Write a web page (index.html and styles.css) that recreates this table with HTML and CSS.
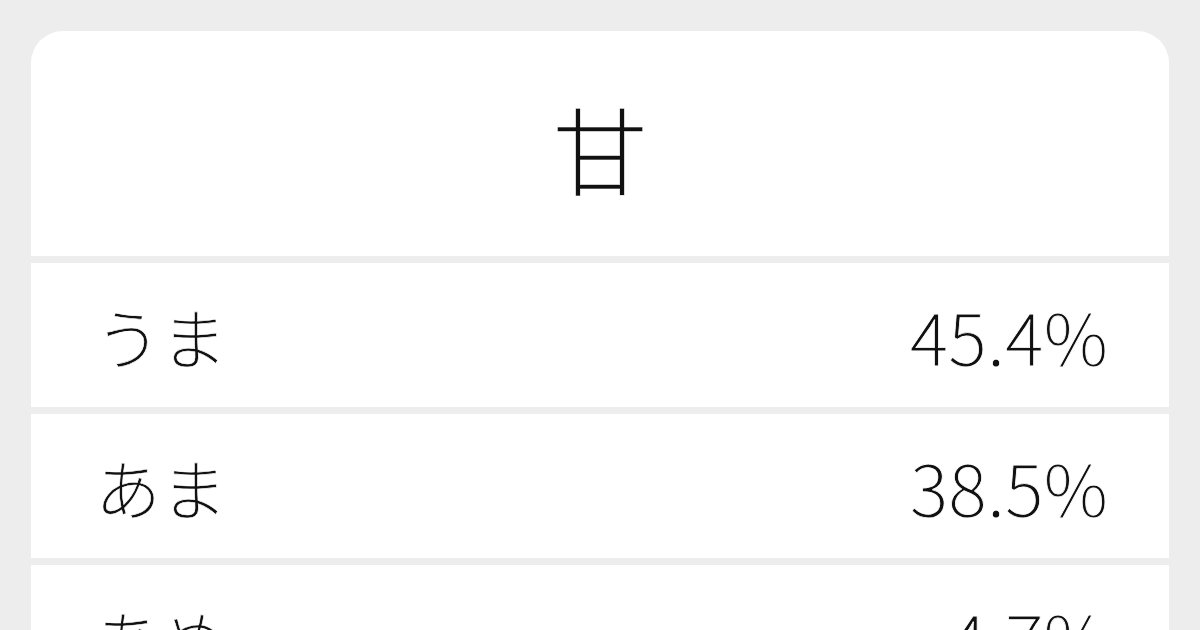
FILE: index.html
```html
<!DOCTYPE html>
<html lang="ja">
<head>
<meta charset="utf-8">
<link rel="stylesheet" href="styles.css">
</head>
<body>
<div class="card">
  <div class="head"><span class="kanji">甘</span></div>
  <div class="row"><span class="yomi">うま</span><span class="pct">45.4%</span></div>
  <div class="row"><span class="yomi">あま</span><span class="pct">38.5%</span></div>
  <div class="row"><span class="yomi">あめ</span><span class="pct">4.7%</span></div>
</div>
</body>
</html>
```
FILE: styles.css
```css
html, body {
  margin: 0;
  height: 100%;
  overflow: hidden;
}
body {
  background: #ededed;
  padding: 31px 31px 0 31px;
  box-sizing: border-box;
  font-family: "Noto Sans CJK JP Light", "Noto Sans CJK JP", "Noto Sans", sans-serif;
  font-weight: 300;
  color: #111;
}
.card {
  display: flex;
  flex-direction: column;
  gap: 7px;
  border-radius: 32px 32px 0 0;
  overflow: hidden;
}
.head {
  height: 225px;
  background: #fff;
  display: flex;
  align-items: center;
  justify-content: center;
}
.kanji {
  font-size: 96px;
  line-height: 1;
  position: relative;
  top: 3px;
  -webkit-text-stroke: 0.6px #fff;
}
.row {
  height: 144px;
  background: #fff;
  display: flex;
  align-items: center;
  justify-content: space-between;
  padding: 0 61px 0 64px;
  line-height: 1;
}
.yomi {
  font-size: 66px;
  -webkit-text-stroke: 0.6px #fff;
}
.pct {
  font-size: 72px;
  -webkit-text-stroke: 0.8px #fff;
}
```
